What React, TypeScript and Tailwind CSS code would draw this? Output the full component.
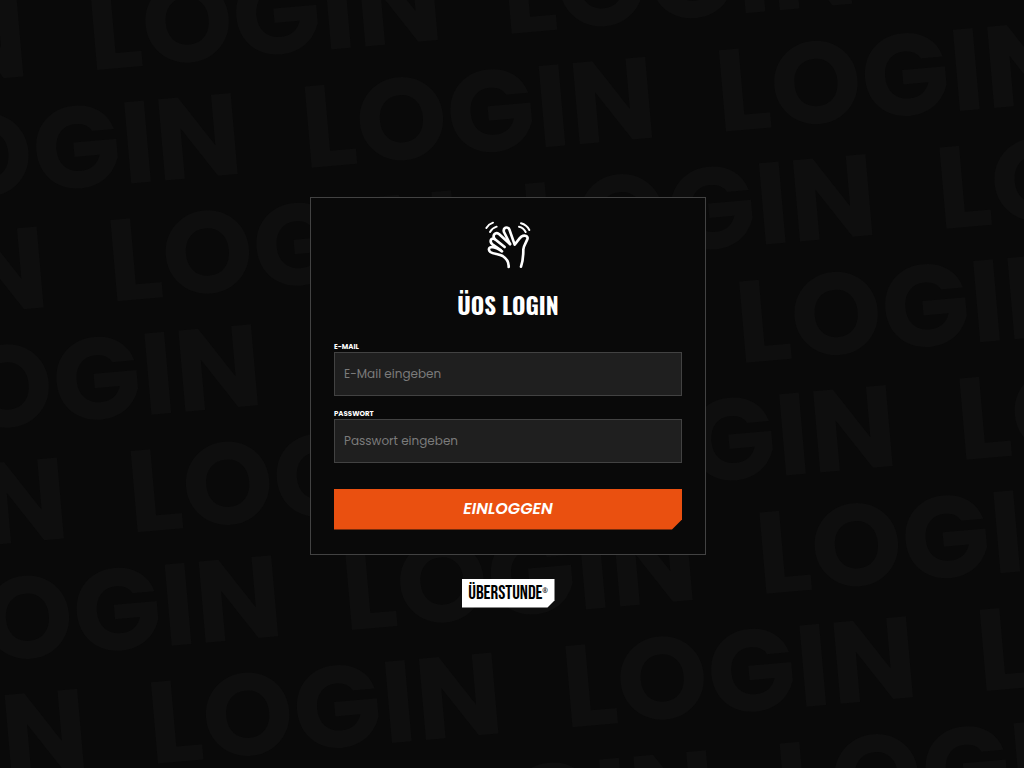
import React from 'react';

const WORDS = Array.from({ length: 6 });
const ROWS = Array.from({ length: 12 });

function BackgroundPattern() {
  return (
    <div
      aria-hidden="true"
      className="pointer-events-none absolute inset-0 flex select-none items-center justify-center overflow-hidden"
    >
      <div className="w-[2450px] shrink-0 -rotate-5 pt-[34px] text-[116px] leading-[116px] font-bold text-[#0e0e0e]">
        {ROWS.map((_, row) => (
          <div key={row} className={row % 2 === 0 ? 'flex' : 'flex pl-[205px]'}>
            {WORDS.map((_, i) => (
              <span key={i} className="w-[416px] shrink-0">
                LOGIN
              </span>
            ))}
          </div>
        ))}
      </div>
    </div>
  );
}

function WavingHand() {
  return (
    <svg
      viewBox="42 30 144 150"
      className="h-[50px] w-12"
      fill="none"
      stroke="currentColor"
      strokeWidth="8"
      strokeLinecap="round"
      strokeLinejoin="round"
      aria-hidden="true"
    >
      <path strokeWidth="6" d="M49 54C54 46 60 41 69 38" />
      <path strokeWidth="6" d="M60 66C65 57 70 53 80 50" />
      <path strokeWidth="6" d="M153 40C164 43 173 50 178 60" />
      <path strokeWidth="6" d="M147 50C157 52 163 58 167 66" />
      <path d="M116 171C117 158 110 146 98 138C86 132 70 132 61 126C54 120 56 111 66 111C76 112 86 117 96 124" />
      <path d="M92 120L67 103C58 95 62 82 74 87L104 111" />
      <path d="M74 87C66 76 76 64 87 72L120 102" />
      <path d="M120 102L102 66C98 53 112 48 118 58L134 104C140 98 146 86 154 80C164 74 176 78 172 88C168 98 161 106 160 118C160 140 158 156 153 170" />
    </svg>
  );
}

interface FieldProps {
  id: string;
  label: string;
  type: string;
  placeholder: string;
}

function Field({ id, label, type, placeholder }: FieldProps) {
  return (
    <div className="flex flex-col gap-px">
      <label htmlFor={id} className="text-[7px] leading-2 font-bold text-white uppercase">
        {label}
      </label>
      <input
        id={id}
        type={type}
        placeholder={placeholder}
        className="h-11 w-full border border-[#424242] bg-[#1f1f1f] px-[9px] text-xs text-white outline-none placeholder:text-[#7b7b7b] focus:border-[#ea5010]"
      />
    </div>
  );
}

export default function App() {
  return (
    <main className="relative flex min-h-screen flex-col items-center justify-center gap-6 bg-[#090909] pt-9 pr-2 font-[Poppins,Inter,sans-serif]">
      <BackgroundPattern />

      <form
        onSubmit={(e) => e.preventDefault()}
        className="relative flex w-full max-w-[396px] flex-col border border-[#424242] bg-[#090909] px-[23px] pt-[22px] pb-6 text-white"
      >
        <div className="flex flex-col items-center gap-[15px]">
          <WavingHand />
          <h1 className="font-['Oswald','Roboto_Condensed','Liberation_Sans_Narrow',sans-serif] text-[23px] leading-10 font-bold">
            ÜOS LOGIN
          </h1>
        </div>

        <div className="mt-[18px] flex flex-col gap-3.5">
          <Field id="email" label="E-Mail" type="email" placeholder="E-Mail eingeben" />
          <Field id="password" label="Passwort" type="password" placeholder="Passwort eingeben" />
        </div>

        <button
          type="submit"
          className="mt-[26px] h-[41px] w-full cursor-pointer bg-[#ea5010] text-base font-semibold text-white uppercase italic [clip-path:polygon(0_0,100%_0,100%_calc(100%-10px),calc(100%-10px)_100%,0_100%)]"
        >
          Einloggen
        </button>
      </form>

      <a
        href="#"
        className="relative flex h-[29px] w-[93px] items-center justify-center bg-white pt-0.5 font-['Bebas_Neue','Roboto_Condensed','Liberation_Sans_Narrow',sans-serif] text-[19px] text-black [clip-path:polygon(0_0,100%_0,100%_calc(100%-7px),calc(100%-7px)_100%,0_100%)]"
      >
        ÜBERSTUNDE
        <sup className="text-[7px]">®</sup>
      </a>
    </main>
  );
}
